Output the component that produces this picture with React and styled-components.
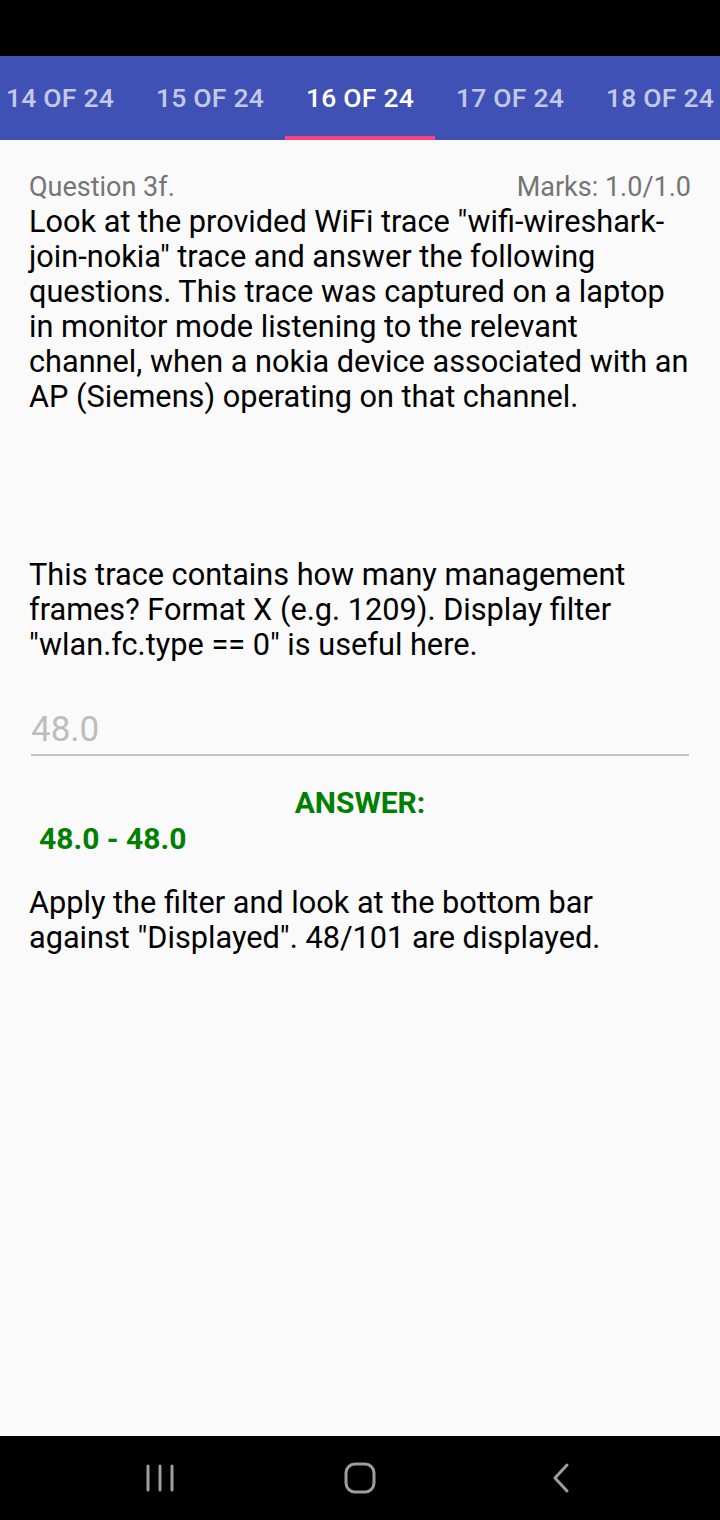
import React from "react";
import styled, { createGlobalStyle } from "styled-components";

const Global = createGlobalStyle`
  html, body { margin: 0; padding: 0; background: #fafafa; }
  body { font-family: Roboto, "Noto Sans", sans-serif; }
  #root { height: 1520px; }
`;

const Screen = styled.div`
  width: 720px;
  height: 1520px;
  display: flex;
  flex-direction: column;
  background: #fafafa;
  overflow: hidden;
`;

const StatusBar = styled.div`
  height: 56px;
  background: #000;
  flex: none;
`;

const TabBar = styled.div`
  height: 84px;
  background: #3f51b5;
  flex: none;
  display: flex;
  overflow: hidden;
`;

const TabStrip = styled.div`
  display: flex;
  margin-left: -15px;
`;

const Tab = styled.div`
  width: 150px;
  flex: none;
  display: flex;
  align-items: center;
  justify-content: center;
  font-family: Roboto, sans-serif;
  font-weight: 500;
  font-size: 26.5px;
  letter-spacing: 0.2px;
  color: ${(p) => (p.$active ? "#ffffff" : "rgba(255,255,255,0.7)")};
  box-sizing: border-box;
  padding-top: 3px;
  border-bottom: 4px solid ${(p) => (p.$active ? "#ff4081" : "transparent")};
  white-space: nowrap;
`;

const Content = styled.main`
  flex: 1;
  padding: 30px 29px 0 29px;
  display: flex;
  flex-direction: column;
`;

const HeaderRow = styled.div`
  display: flex;
  justify-content: space-between;
  align-items: baseline;
  font-size: 27px;
  color: #757575;
  line-height: 34px;
`;

const Paragraph = styled.p`
  margin: ${(p) => p.$margin || "0"};
  margin-right: -1px;
  font-size: 30.7px;
  line-height: 35px;
  color: #000;
`;

const InputWrap = styled.div`
  margin: 46px 2px 0 2px;
  border-bottom: 2px solid #c4c4c4;
  padding-bottom: 2px;
`;

const InputValue = styled.div`
  font-size: 35px;
  line-height: 44px;
  color: #bdbdbd;
`;

const AnswerTitle = styled.div`
  margin-top: 29px;
  text-align: center;
  font-weight: 700;
  font-size: 30px;
  line-height: 35px;
  color: #008000;
`;

const AnswerRange = styled.div`
  padding-left: 10px;
  font-weight: 700;
  font-size: 30px;
  line-height: 38px;
  color: #008000;
`;

const NavBar = styled.div`
  height: 84px;
  background: #000;
  flex: none;
  display: grid;
  grid-template-columns: repeat(3, 200px);
  align-items: center;
  justify-items: center;
  padding: 0 60px;
`;

const NavIcon = styled.svg`
  display: block;
  margin-left: ${(p) => p.$shift || 0}px;
`;

export default function App() {
  const tabs = [14, 15, 16, 17, 18];
  return (
    <Screen>
      <Global />
      <StatusBar />
      <TabBar>
        <TabStrip>
          {tabs.map((n) => (
            <Tab key={n} $active={n === 16}>
              {n} OF 24
            </Tab>
          ))}
        </TabStrip>
      </TabBar>
      <Content>
        <HeaderRow>
          <span>Question 3f.</span>
          <span>Marks: 1.0/1.0</span>
        </HeaderRow>
        <Paragraph>
          Look at the provided WiFi trace "wifi-wireshark-join-nokia" trace and
          answer the following questions. This trace was captured on a laptop
          in monitor mode listening to the relevant channel, when a nokia
          device associated with an AP (Siemens) operating on that channel.
        </Paragraph>
        <Paragraph $margin="143px 0 0 0">
          This trace contains how many management frames? Format X (e.g. 1209).
          Display filter "wlan.fc.type == 0" is useful here.
        </Paragraph>
        <InputWrap>
          <InputValue>48.0</InputValue>
        </InputWrap>
        <AnswerTitle>ANSWER:</AnswerTitle>
        <AnswerRange>48.0 - 48.0</AnswerRange>
        <Paragraph $margin="27px 0 0 0">
          Apply the filter and look at the bottom bar against "Displayed".
          48/101 are displayed.
        </Paragraph>
      </Content>
      <NavBar>
        <NavIcon width="30" height="30" viewBox="0 0 30 30">
          <g stroke="#9e9e9e" strokeWidth="3" strokeLinecap="round">
            <line x1="3" y1="3" x2="3" y2="27" />
            <line x1="15" y1="3" x2="15" y2="27" />
            <line x1="27" y1="3" x2="27" y2="27" />
          </g>
        </NavIcon>
        <NavIcon width="32" height="32" viewBox="0 0 32 32">
          <rect x="2" y="2" width="28" height="28" rx="9" fill="none" stroke="#9e9e9e" strokeWidth="3" />
        </NavIcon>
        <NavIcon $shift={4} width="20" height="32" viewBox="0 0 20 32">
          <polyline points="15,3 3,16 15,29" fill="none" stroke="#9e9e9e" strokeWidth="3" strokeLinecap="round" strokeLinejoin="round" />
        </NavIcon>
      </NavBar>
    </Screen>
  );
}
